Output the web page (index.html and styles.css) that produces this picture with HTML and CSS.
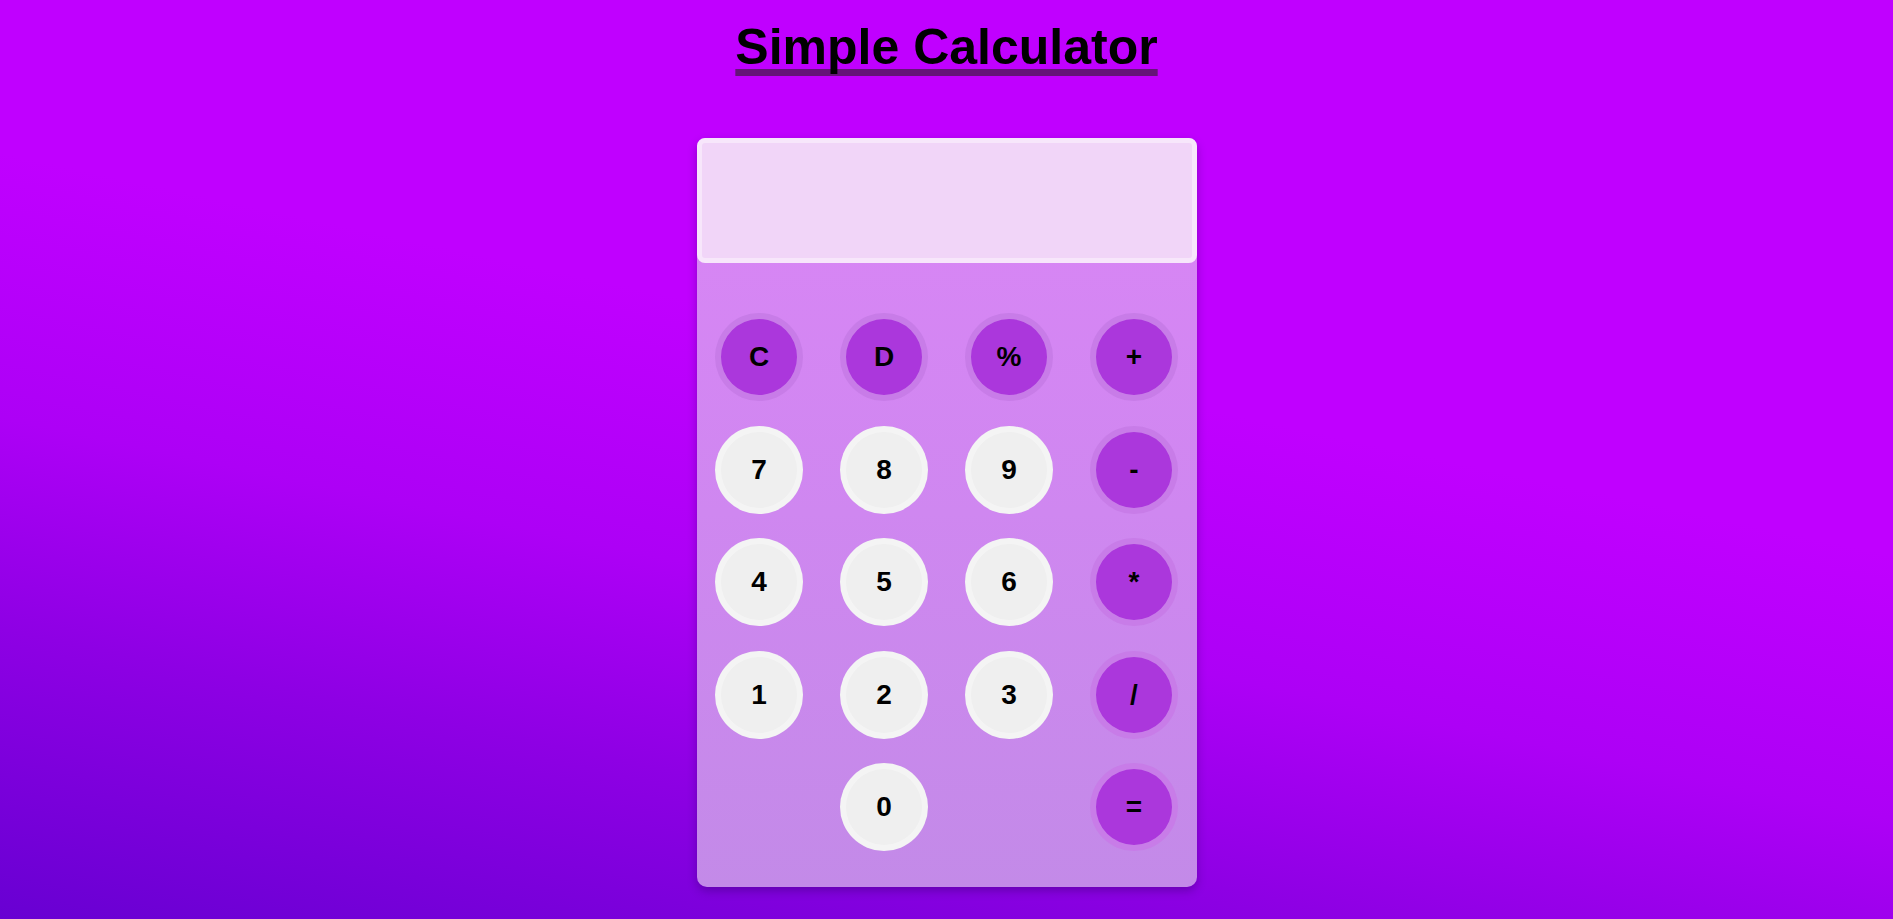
FILE: index.html
```html
<!DOCTYPE html>
<html lang="en">
<head>
<meta charset="utf-8">
<title>Simple Calculator</title>
<link rel="stylesheet" href="styles.css">
</head>
<body>
  <h1 class="title">Simple Calculator</h1>
  <div class="calculator">
    <div class="display"></div>
    <div class="keys">
      <button class="key op">C</button>
      <button class="key op">D</button>
      <button class="key op">%</button>
      <button class="key op">+</button>
      <button class="key num">7</button>
      <button class="key num">8</button>
      <button class="key num">9</button>
      <button class="key op">-</button>
      <button class="key num">4</button>
      <button class="key num">5</button>
      <button class="key num">6</button>
      <button class="key op">*</button>
      <button class="key num">1</button>
      <button class="key num">2</button>
      <button class="key num">3</button>
      <button class="key op">/</button>
      <button class="key num col-2">0</button>
      <button class="key op col-4">=</button>
    </div>
  </div>
</body>
</html>
```

FILE: styles.css
```css
html, body {
  height: 100%;
}
body {
  margin: 0;
  font-family: "Liberation Sans", Arial, sans-serif;
  background: linear-gradient(12deg, #6800d2 0%, #8e00e4 22%, #ad00f6 38%, #c000ff 58%, #c000ff 100%);
  display: flex;
  flex-direction: column;
  align-items: center;
}
.title {
  margin: 18px 0 0;
  font-size: 50px;
  line-height: 58px;
  font-weight: bold;
  color: #000;
  text-decoration: underline;
  text-decoration-color: #651479;
  text-decoration-thickness: 7px;
  text-underline-offset: 5px;
  text-decoration-skip-ink: none;
}
.calculator {
  margin-top: 62px;
  width: 500px;
  height: 749px;
  border-radius: 10px;
  background: linear-gradient(180deg, #da85f6 0%, #cf87f0 50%, #c38ae8 100%);
  box-shadow: 0 4px 10px rgba(40, 0, 90, 0.35);
  display: flex;
  flex-direction: column;
}
.display {
  box-sizing: border-box;
  height: 125px;
  border: 5px solid #f7e6fb;
  background: #f1d5f8;
  border-radius: 8px;
}
.keys {
  flex: 1;
  padding: 50px 0 36px;
  display: grid;
  grid-template-columns: repeat(4, 1fr);
  grid-auto-rows: 88px;
  row-gap: 24.5px;
  justify-items: center;
  align-items: center;
}
.key {
  box-sizing: border-box;
  width: 88px;
  height: 88px;
  padding: 0;
  border-radius: 50%;
  border: 6px solid rgba(255, 255, 255, 0.35);
  font-family: "Liberation Sans", Arial, sans-serif;
  font-size: 28px;
  font-weight: bold;
  color: #000;
  display: flex;
  align-items: center;
  justify-content: center;
  cursor: pointer;
}
.num {
  background: #efefef;
}
.op {
  background: #ab37dc;
}
.col-2 {
  grid-column: 2;
}
.col-4 {
  grid-column: 4;
}
```
